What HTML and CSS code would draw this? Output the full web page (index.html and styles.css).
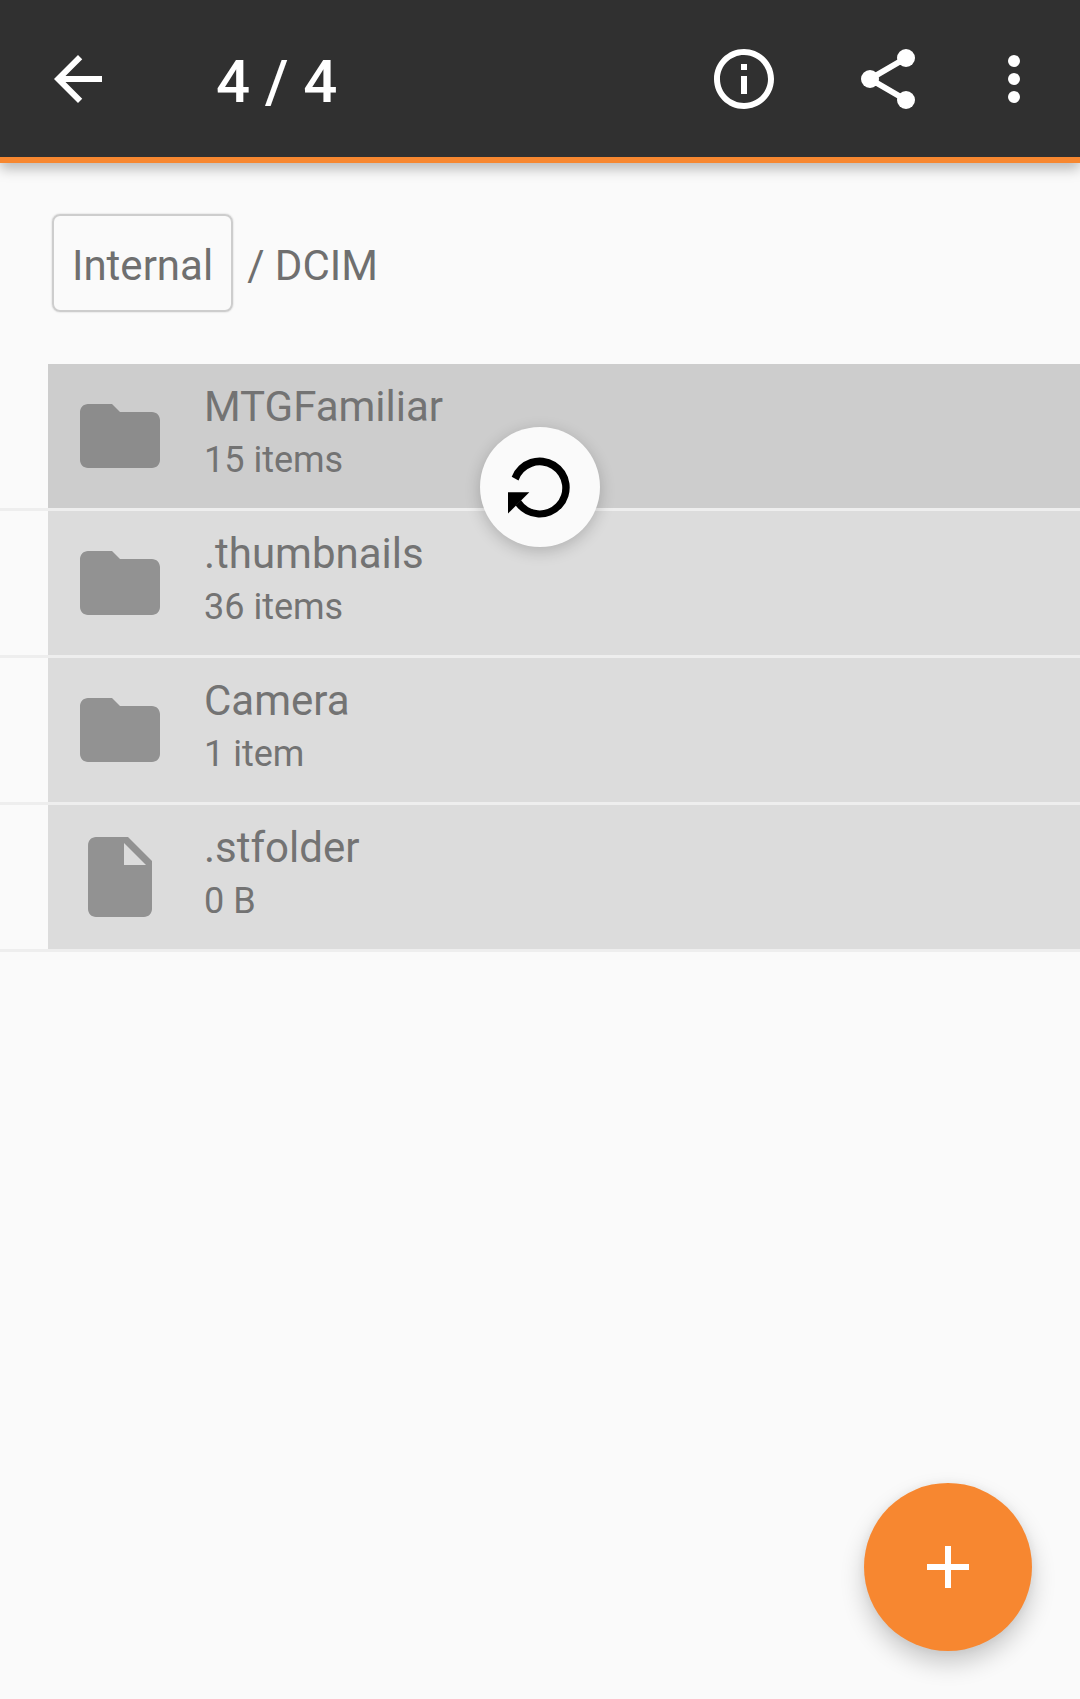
FILE: index.html
```html
<!DOCTYPE html>
<html lang="en">
<head>
  <meta charset="utf-8">
  <meta name="viewport" content="width=device-width, initial-scale=1">
  <title>Files</title>
  <link rel="stylesheet" href="styles.css">
</head>
<body>
  <header class="toolbar">
    <button class="icon-button" type="button" aria-label="Back">
      <svg class="icon" viewBox="0 0 24 24"><path d="M20 11H7.83l5.59-5.59L12 4l-8 8 8 8 1.41-1.41L7.83 13H20v-2z"/></svg>
    </button>
    <h1 class="title">4 / 4</h1>
    <div class="actions">
      <button class="icon-button" type="button" aria-label="Details">
        <svg class="icon" viewBox="0 0 24 24"><path d="M11 17h2v-6h-2v6zm1-15C6.48 2 2 6.48 2 12s4.48 10 10 10 10-4.48 10-10S17.52 2 12 2zm0 18c-4.41 0-8-3.59-8-8s3.59-8 8-8 8 3.59 8 8-3.59 8-8 8zM11 9h2V7h-2v2z"/></svg>
      </button>
      <button class="icon-button" type="button" aria-label="Share">
        <svg class="icon" viewBox="0 0 24 24"><path d="M18 5L6 12l12 7" fill="none" stroke="currentColor" stroke-width="2"/><circle cx="18" cy="5" r="3"/><circle cx="6" cy="12" r="3"/><circle cx="18" cy="19" r="3"/></svg>
      </button>
      <button class="icon-button" type="button" aria-label="More options">
        <svg class="icon" viewBox="0 0 24 24"><circle cx="12" cy="6" r="2"/><circle cx="12" cy="12" r="2"/><circle cx="12" cy="18" r="2"/></svg>
      </button>
    </div>
  </header>

  <main>
    <nav class="breadcrumb" aria-label="Folder path">
      <button class="crumb" type="button">Internal</button>
      <span>/ DCIM</span>
    </nav>

    <div class="listing">
      <ul class="files">
        <li class="row">
          <button class="file pressed" type="button">
            <svg class="file-icon" viewBox="0 0 24 24"><path d="M10 4H4c-1.1 0-2 .9-2 2v12c0 1.1.9 2 2 2h16c1.1 0 2-.9 2-2V8c0-1.1-.9-2-2-2h-8l-2-2z"/></svg>
            <span class="text"><span class="name">MTGFamiliar</span><span class="detail">15 items</span></span>
          </button>
        </li>
        <li class="row">
          <button class="file" type="button">
            <svg class="file-icon" viewBox="0 0 24 24"><path d="M10 4H4c-1.1 0-2 .9-2 2v12c0 1.1.9 2 2 2h16c1.1 0 2-.9 2-2V8c0-1.1-.9-2-2-2h-8l-2-2z"/></svg>
            <span class="text"><span class="name">.thumbnails</span><span class="detail">36 items</span></span>
          </button>
        </li>
        <li class="row">
          <button class="file" type="button">
            <svg class="file-icon" viewBox="0 0 24 24"><path d="M10 4H4c-1.1 0-2 .9-2 2v12c0 1.1.9 2 2 2h16c1.1 0 2-.9 2-2V8c0-1.1-.9-2-2-2h-8l-2-2z"/></svg>
            <span class="text"><span class="name">Camera</span><span class="detail">1 item</span></span>
          </button>
        </li>
        <li class="row">
          <button class="file" type="button">
            <svg class="file-icon" viewBox="0 0 24 24"><path d="M6 2c-1.1 0-1.99.9-1.99 2L4 20c0 1.1.89 2 1.99 2H18c1.1 0 2-.9 2-2V8l-6-6H6zm7 7V3.5L18.5 9H13z"/></svg>
            <span class="text"><span class="name">.stfolder</span><span class="detail">0 B</span></span>
          </button>
        </li>
      </ul>
      <div class="refresh" role="status" aria-label="Refreshing">
        <svg class="refresh-icon" viewBox="-60 -60 120 120"><path d="M-28.3 -10.3A30 30 0 1 1 -24.3 18.5L-19 13.3A22.5 22.5 0 1 0 -21.5 -6.5z"/><path d="M-32 5.3h21.3L-32 26.6z"/></svg>
      </div>
    </div>
  </main>

  <button class="fab" type="button" aria-label="Add">
    <svg class="icon" viewBox="0 0 24 24"><path d="M19 13h-6v6h-2v-6H5v-2h6V5h2v6h6v2z"/></svg>
  </button>
</body>
</html>
```

FILE: styles.css
```css
* {
  box-sizing: border-box;
}

body {
  margin: 0;
  min-height: 100vh;
  background: #fafafa;
  color: #6f6f6f;
  font-family: Roboto, "Liberation Sans", sans-serif;
}

button {
  margin: 0;
  padding: 0;
  border: 0;
  background: none;
  color: inherit;
  font: inherit;
  text-align: left;
}

svg {
  display: block;
  fill: currentColor;
}

.toolbar {
  display: flex;
  align-items: center;
  padding: 40px 30px 39px 42px;
  border-bottom: 6px solid #f78730;
  background: #303030;
  color: #fff;
  box-shadow: 0 6px 12px rgba(0, 0, 0, 0.26);
}

.icon {
  width: 72px;
  height: 72px;
}

.title {
  flex: 1;
  margin: 0;
  padding: 6px 0 0 102px;
  font-size: 60px;
  font-weight: 500;
  line-height: 72px;
}

.actions {
  display: flex;
}

.actions .icon-button {
  padding-left: 72px;
}

.actions .icon-button:last-child {
  padding-left: 54px;
}

.breadcrumb {
  display: flex;
  align-items: baseline;
  gap: 14px;
  padding: 51px 52px 52px;
  font-size: 42px;
  line-height: 50px;
}

.crumb {
  padding: 25px 18px 19px;
  border: 2px solid #cdcdcd;
  border-radius: 8px;
  box-shadow: 0 0 2px rgba(0, 0, 0, 0.2);
}

.listing {
  position: relative;
}

.files {
  margin: 0;
  padding: 0;
  list-style: none;
}

.row {
  padding-left: 48px;
  border-bottom: 3px solid #eee;
}

.file {
  display: flex;
  align-items: center;
  gap: 36px;
  width: 100%;
  min-height: 144px;
  padding: 18px 24px;
  background: #dcdcdc;
  color: #737373;
}

.file.pressed {
  background: #cdcdcd;
}

.file-icon {
  width: 96px;
  height: 96px;
  color: #929292;
}

.pressed .file-icon {
  color: #8c8c8c;
}

.text {
  display: flex;
  flex-direction: column;
  gap: 7px;
  padding-bottom: 9px;
}

.name {
  font-size: 42px;
  line-height: 50px;
}

.detail {
  font-size: 36px;
  line-height: 42px;
}

.refresh {
  position: absolute;
  top: 63px;
  left: calc(50% - 60px);
  width: 120px;
  height: 120px;
  border-radius: 50%;
  background: #fafafa;
  color: #000;
  box-shadow: 0 4px 16px rgba(0, 0, 0, 0.2);
}

.fab {
  position: fixed;
  right: 48px;
  bottom: 48px;
  display: grid;
  place-items: center;
  width: 168px;
  height: 168px;
  border-radius: 50%;
  background: #f78730;
  color: #fff;
  box-shadow: 0 12px 24px rgba(0, 0, 0, 0.2), 0 0 12px rgba(0, 0, 0, 0.06);
}
```
